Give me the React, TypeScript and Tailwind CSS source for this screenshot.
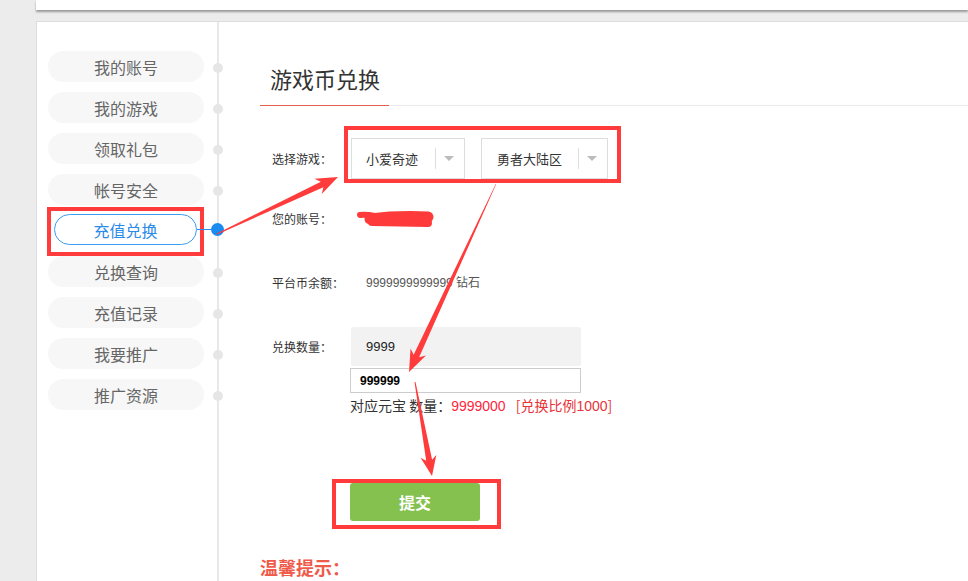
import React from 'react';

const menu = ['我的账号', '我的游戏', '领取礼包', '帐号安全', '充值兑换', '兑换查询', '充值记录', '我要推广', '推广资源'];
const ACTIVE = 4;

type Pt = [number, number];

// tapered arrow polygon: thin tail, widening shaft, triangular head
function arrowPoints(tail: Pt, tip: Pt, tailW: number, neckW: number, headLen: number, headW: number) {
  const dx = tip[0] - tail[0];
  const dy = tip[1] - tail[1];
  const len = Math.hypot(dx, dy);
  const ux = dx / len;
  const uy = dy / len;
  const nx = -uy;
  const ny = ux;
  const neck: Pt = [tip[0] - ux * headLen * 0.8, tip[1] - uy * headLen * 0.8];
  const base: Pt = [tip[0] - ux * headLen, tip[1] - uy * headLen];
  const p = (c: Pt, w: number, s: number) => `${c[0] + nx * w * s / 2},${c[1] + ny * w * s / 2}`;
  return [
    p(tail, tailW, 1),
    p(neck, neckW, 1),
    p(base, headW, 1),
    `${tip[0]},${tip[1]}`,
    p(base, headW, -1),
    p(neck, neckW, -1),
    p(tail, tailW, -1),
  ].join(' ');
}

function Select({ label, width, pl }: { label: string; width: string; pl: string }) {
  return (
    <div className={`flex h-[41px] items-center border border-[#dddddd] bg-white ${width} ${pl}`}>
      <span className="text-[13px] text-[#333]">{label}</span>
      <span className="ml-auto h-[21px] w-px bg-[#dddddd]" />
      <span className="ml-[8px] mr-[10px] border-x-[5px] border-t-[5px] border-x-transparent border-t-[#bbbbbb]" />
    </div>
  );
}

export default function App() {
  return (
    <div className="relative h-[581px] w-[968px] overflow-hidden bg-[#ececec] font-['Noto_Sans_CJK_SC','Microsoft_YaHei',sans-serif]">
      {/* top bar */}
      <div className="ml-[36px] h-[10px] bg-white shadow-[0_2px_2px_rgba(0,0,0,0.35)]" />

      <div className="ml-[36px] mt-[11px] flex h-[600px] w-[960px] border border-[#dddddd] bg-white">
        {/* Sidebar */}
        <div className="w-[182px] shrink-0 border-r-2 border-[#e8e8e8] pl-[11px] pt-[29px]">
          <div className="flex flex-col gap-[10px]">
            {menu.map((item, i) => (
              <div key={item} className="relative h-[31px] w-[156px]">
                {i === ACTIVE ? (
                  <>
                    <div className="absolute left-[-1px] top-[-8px] h-[49px] w-[157px] border-4 border-[#ff3b3b]" />
                    <div className="absolute left-[6px] top-[-1px] flex h-[31px] w-[143px] items-center justify-center rounded-full border border-[#3c9cf2] bg-white text-[16px] text-[#2a8be8]">
                      {item}
                    </div>
                    <div className="absolute left-[149px] top-[14px] h-px w-[16px] bg-[#2a8be8]" />
                    <div className="absolute left-[163px] top-[8px] h-[13px] w-[13px] rounded-full bg-[#1a8cf0]" />
                  </>
                ) : (
                  <>
                    <div className="flex h-full w-full items-center justify-center rounded-full bg-[#f7f7f7] text-[16px] text-[#666]">
                      {item}
                    </div>
                    <div className="absolute left-[165px] top-[12px] h-[10px] w-[10px] rounded-full bg-[#e6e6e6]" />
                  </>
                )}
              </div>
            ))}
          </div>
        </div>

        {/* Content */}
        <div className="flex-1">
          <div className="ml-[41px] pt-[41px]">
            <div className="pb-[12px] pl-[10px] text-[22px] leading-[30px] text-[#333]">游戏币兑换</div>
            <div className="flex h-px">
              <div className="w-[129px] bg-[#e5604a]" />
              <div className="flex-1 bg-[#ebebeb]" />
            </div>
          </div>

          <div className="pl-[53px] text-[12px] text-[#333]">
            {/* game select */}
            <div className="mt-[32px] flex h-[41px] items-center">
              <div className="w-[79px]">选择游戏：</div>
              <div className="relative flex gap-[16px]">
                <div className="absolute left-[-7px] top-[-12px] h-[57px] w-[277px] border-4 border-[#ff3b3b]" />
                <Select label="小爱奇迹" width="w-[114px]" pl="pl-[14px]" />
                <Select label="勇者大陆区" width="w-[127px]" pl="pl-[15px]" />
              </div>
            </div>

            {/* account */}
            <div className="mt-[28px] flex h-[24px] items-center">
              <div className="w-[84px]">您的账号：</div>
              <svg width="80" height="20" viewBox="0 0 80 20">
                <path d="M4 6 C 12 5, 18 7, 24 8" stroke="#ff3a3a" strokeWidth="6" strokeLinecap="round" fill="none" />
                <path d="M14 10 C 30 8, 50 7, 72 8" stroke="#ff3a3a" strokeWidth="11" strokeLinecap="round" fill="none" />
                <path d="M16 13 L 72 14" stroke="#ff3a3a" strokeWidth="8" strokeLinecap="round" />
              </svg>
            </div>

            {/* balance */}
            <div className="mt-[40px] flex h-[24px] items-center">
              <div className="w-[94px]">平台币余额：</div>
              <div className="font-['Liberation_Sans','Noto_Sans_CJK_SC',sans-serif] text-[#555]">9999999999999 钻石</div>
            </div>

            {/* amount */}
            <div className="mt-[32px] flex">
              <div className="flex h-[39px] w-[78px] items-center">兑换数量：</div>
              <div className="flex flex-col">
                <div className="ml-px flex h-[39px] w-[230px] items-center rounded-[2px] bg-[#f2f2f2] pl-[15px] font-['Liberation_Sans',sans-serif] text-[13px] text-[#222]">
                  9999
                </div>
                <div className="mt-[2px] flex h-[25px] w-[231px] items-center border border-[#cccccc] pl-[9px] font-['Liberation_Sans',sans-serif] text-[12px] font-bold text-black">
                  999999
                </div>
                <div className="mt-[2px] whitespace-nowrap text-[14px] leading-[20px]">
                  <span className="text-[#333]">对应元宝 数量：</span>
                  <span className="font-['Liberation_Sans',sans-serif] text-[#ff1f3d]">9999000</span>
                  <span className="ml-[10px] text-[#e8333a]">[兑换比例<span className="font-['Liberation_Sans',sans-serif]">1000</span>]</span>
                </div>
              </div>
            </div>

            {/* submit */}
            <div className="relative ml-[78px] mt-[67px] w-[130px]">
              <div className="absolute left-[-18px] top-[-4px] h-[50px] w-[169px] border-4 border-[#ff3b3b]" />
              <button className="relative flex h-[38px] w-[130px] items-center justify-center rounded-[3px] bg-[#85c14f] text-[16px] font-bold text-white">
                提交
              </button>
            </div>
          </div>

          <div className="ml-[41px] mt-[34px] text-[18px] font-bold leading-[24px] text-[#ef5b4b]">温馨提示：</div>
        </div>
      </div>

      {/* annotation arrows */}
      <svg className="pointer-events-none absolute left-0 top-0" width="968" height="581" viewBox="0 0 968 581">
        <g fill="#ff3b3b">
          <polygon points={arrowPoints([217, 234], [338, 177], 1, 6, 22, 17)} />
          <polygon points={arrowPoints([496, 184], [409, 372], 0.5, 6, 22, 17)} />
          <polygon points={arrowPoints([415, 382], [432, 476], 1, 6, 20, 16)} />
        </g>
      </svg>
    </div>
  );
}
